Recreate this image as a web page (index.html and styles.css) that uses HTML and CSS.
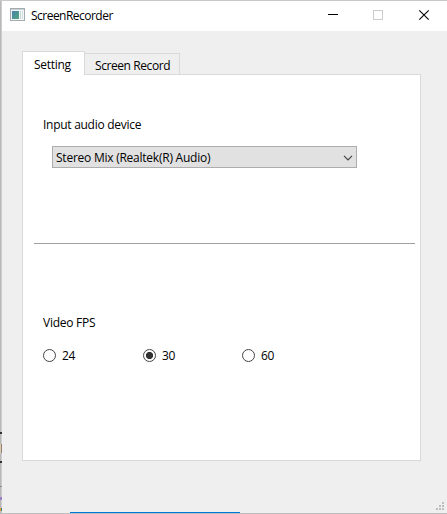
FILE: index.html
```html
<!DOCTYPE html>
<html lang="en">
<head>
<meta charset="utf-8">
<title>ScreenRecorder</title>
<link rel="stylesheet" href="styles.css">
</head>
<body>
<div class="window">
  <header class="titlebar">
    <svg class="app-icon" width="15" height="13" viewBox="0 0 15 13" shape-rendering="crispEdges">
      <defs><linearGradient id="g" x1="0" y1="0" x2="1" y2="1"><stop offset="0" stop-color="#4b7fae"/><stop offset="1" stop-color="#4fa87c"/></linearGradient></defs>
      <rect x=".5" y=".5" width="14" height="12" fill="#f4f5f6" stroke="#a3abb0"/>
      <rect x="1" y="1" width="13" height="1" fill="#c9d0d5"/>
      <rect x="2" y="3" width="7" height="8" fill="url(#g)"/>
      <rect x="10" y="3" width="1" height="8" fill="#c3dbd3"/>
      <rect x="12" y="3" width="1" height="8" fill="#d5dfe2"/>
    </svg>
    <h1 class="title">ScreenRecorder</h1>
    <svg class="controls" width="104" height="12" viewBox="0 0 104 12">
      <path d="M1 5.500h10" stroke="#000"/>
      <rect x="46.500" y="1.500" width="9" height="9" fill="none" stroke="#ccc"/>
      <path d="M92.300 1.300l9.400 9.400M101.700 1.300l-9.400 9.400" stroke="#000" stroke-width="1.100"/>
    </svg>
  </header>
  <main class="content">
    <nav class="tabs">
      <div class="tab active"><span class="t-setting">Setting</span></div>
      <div class="tab"><span class="t-record">Screen Record</span></div>
    </nav>
    <section class="panel">
      <div class="label t-input">Input audio device</div>
      <div class="combo">
        <span class="t-combo">Stereo Mix (Realtek(R) Audio)</span>
        <svg width="10" height="6" viewBox="0 0 10 6"><path d="M1 .9l4 4 4-4" fill="none" stroke="#444" stroke-width="1.200"/></svg>
      </div>
      <div class="divider"></div>
      <div class="label t-fps">Video FPS</div>
      <div class="radios">
        <div class="radio"><i class="dot"></i><span>24</span></div>
        <div class="radio"><i class="dot on"></i><span>30</span></div>
        <div class="radio"><i class="dot"></i><span>60</span></div>
      </div>
    </section>
  </main>
  <svg class="grip" width="8" height="8" viewBox="0 0 8 8" fill="#bfbfbf" shape-rendering="crispEdges">
    <path d="M6 0h2v2h-2zM3 3h2v2h-2zM6 3h2v2h-2zM0 6h2v2h-2zM3 6h2v2h-2zM6 6h2v2h-2z"/>
  </svg>
  <div class="edge-left"><i class="m1"></i><i class="m2"></i><i class="m3"></i><i class="m4"></i><i class="m5"></i><i class="m6"></i></div>
  <div class="task-line"></div>
</div>
</body>
</html>
```

FILE: styles.css
```css
* { box-sizing: border-box; }
body {
  margin: 0;
  font: 12px/16px "Open Sans", "Noto Sans", sans-serif;
  color: #000;
  overflow: hidden;
}
.window {
  position: relative;
  width: 447px;
  height: 514px;
  padding-left: 2px;
  background: #efefef;
  border-top: 1px solid #c8c8c8;
  border-bottom: 1px solid #bdbdbd;
}
.titlebar {
  display: flex;
  align-items: center;
  height: 30px;
  padding: 0 16px 0 8px;
  background: #fff;
}
.app-icon { margin-top: -3px; }
.title {
  margin: 0 auto 0 6px;
  font-size: 12px;
  font-weight: 400;
  letter-spacing: -0.52px;
}
.controls { margin-top: -2px; }
.content { padding: 20px 26px 0 20px; }
.tabs {
  display: flex;
  align-items: flex-end;
  height: 24px;
}
.tab {
  height: 22px;
  width: 96px;
  margin-left: -1px;
  padding: 4px 0 0 10px;
  border: 1px solid #d9d9d9;
  white-space: nowrap;
}
.tab.active {
  position: relative;
  z-index: 1;
  width: 63px;
  height: 24px;
  margin: 0;
  padding: 5px 0 0 11px;
  background: #fff;
  border-bottom: 0;
}
.panel {
  height: 387px;
  margin-top: -1px;
  padding: 42px 5px 0 11px;
  background: #fff;
  border: 1px solid #d9d9d9;
}
.label { margin-left: 9px; }
.combo {
  display: flex;
  align-items: center;
  justify-content: space-between;
  width: 305px;
  height: 22px;
  margin: 13px 0 0 18px;
  padding: 0 3px;
  background: #e1e1e1;
  border: 1px solid #adadad;
}
.combo span { padding-top: 2px; }
.combo svg { margin-top: 1px; }
.divider {
  height: 1px;
  margin: 75px 0 71px;
  background: #a0a0a0;
}
.radios {
  display: grid;
  grid-template-columns: 100px 99px 60px;
  margin: 17px 0 0 9px;
}
.radio {
  display: flex;
  align-items: center;
  gap: 6px;
}
.dot {
  width: 13px;
  height: 13px;
  margin-top: -2px;
  border: 1px solid #444;
  border-radius: 50%;
}
.dot.on {
  background: radial-gradient(circle, #333 3.2px, #fff 4px);
}
.t-setting { letter-spacing: -0.3px; }
.t-record { letter-spacing: -0.42px; }
.t-input { letter-spacing: -0.28px; }
.t-combo { letter-spacing: -0.24px; }
.t-fps { letter-spacing: -0.25px; }
.radio span { letter-spacing: -0.4px; }
.grip { position: absolute; left: 436px; top: 501px; }
.edge-left {
  position: absolute;
  left: 0;
  top: 0;
  width: 2px;
  height: 512px;
  background: linear-gradient(90deg, #b8b8b8 50%, #cecece 50%);
}
.edge-left i { position: absolute; left: 0; width: 2px; height: 2px; background: #303038; }
.edge-left .m1 { top: 431px; }
.edge-left .m2 { top: 443px; height: 9px; background: linear-gradient(90deg, #d8cfa8 50%, #967c80 50%); }
.edge-left .m3 { top: 460px; }
.edge-left .m4 { top: 485px; height: 1px; background: #888; }
.edge-left .m5 { top: 496px; height: 3px; background: #9b80c8; }
.edge-left .m6 { top: 507px; height: 3px; background: linear-gradient(90deg, #e59a3c 50%, #4c7770 50%); }
.task-line {
  position: absolute;
  left: 70px;
  top: 511px;
  width: 170px;
  height: 1px;
  background: #0078d7;
}
```
